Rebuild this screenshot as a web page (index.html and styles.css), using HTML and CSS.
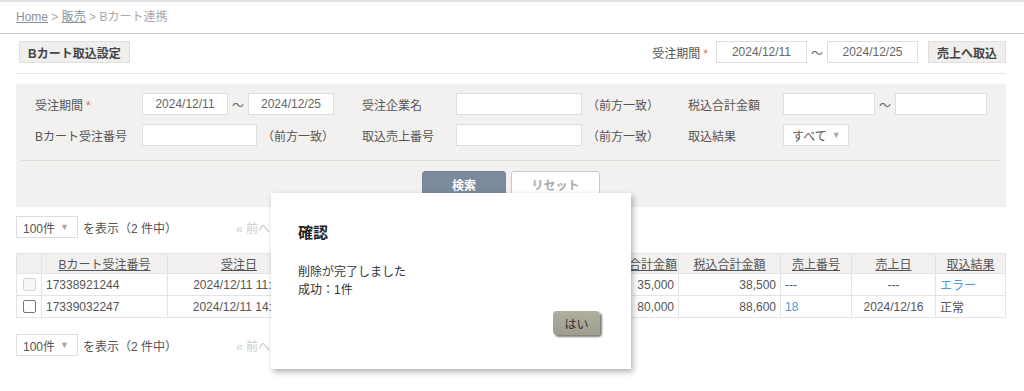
FILE: index.html
```html
<!DOCTYPE html>
<html lang="ja">
<head>
    <meta charset="UTF-8">
    <title>Bカート連携</title>
    <link rel="stylesheet" href="styles.css">
</head>
<body>
    <div class="breadcrumb">
        <a href="#">Home</a> &gt; <a href="#">販売</a> &gt; Bカート連携
    </div>

    <div class="page">
        <div class="toolbar">
            <button class="btn-light">Bカート取込設定</button>
            <div class="toolbar-right">
                <span class="label">受注期間<span class="req">*</span></span>
                <input class="date" value="2024/12/11">
                <span class="tilde">〜</span>
                <input class="date" value="2024/12/25">
                <button class="btn-light">売上へ取込</button>
            </div>
        </div>

        <div class="search-panel">
            <div class="search-grid">
                <span class="label">受注期間<span class="req">*</span></span>
                <div class="field">
                    <input class="date w86" value="2024/12/11">
                    <span class="tilde">〜</span>
                    <input class="date w86" value="2024/12/25">
                </div>
                <span class="label">受注企業名</span>
                <div class="field">
                    <input class="w126">
                    <span class="hint">（前方一致）</span>
                </div>
                <span class="label">税込合計金額</span>
                <div class="field">
                    <input class="w92">
                    <span class="tilde">〜</span>
                    <input class="w92">
                </div>

                <span class="label">Bカート受注番号</span>
                <div class="field">
                    <input class="w115">
                    <span class="hint">（前方一致）</span>
                </div>
                <span class="label">取込売上番号</span>
                <div class="field">
                    <input class="w126">
                    <span class="hint">（前方一致）</span>
                </div>
                <span class="label">取込結果</span>
                <div class="field">
                    <div class="select w66">すべて <span class="arrow">▼</span></div>
                </div>
            </div>
            <div class="search-actions">
                <button class="btn-search">検索</button>
                <button class="btn-reset">リセット</button>
            </div>
        </div>

        <div class="pager">
            <div class="select w62">100件 <span class="arrow">▼</span></div>
            <span class="count">を表示（2 件中）</span>
            <span class="prev">« 前へ</span>
        </div>

        <table class="list">
            <colgroup>
                <col style="width:25px">
                <col style="width:126px">
                <col style="width:143px">
                <col style="width:290px">
                <col style="width:78px">
                <col style="width:102px">
                <col style="width:71px">
                <col style="width:84px">
                <col>
            </colgroup>
            <thead>
                <tr>
                    <th></th>
                    <th><a href="#">Bカート受注番号</a></th>
                    <th><a href="#">受注日</a></th>
                    <th></th>
                    <th><a href="#">税抜合計金額</a></th>
                    <th><a href="#">税込合計金額</a></th>
                    <th><a href="#">売上番号</a></th>
                    <th><a href="#">売上日</a></th>
                    <th><a href="#">取込結果</a></th>
                </tr>
            </thead>
            <tbody>
                <tr>
                    <td class="chk"><span class="box disabled"></span></td>
                    <td>17338921244</td>
                    <td class="center">2024/12/11 11:37</td>
                    <td></td>
                    <td class="num">35,000</td>
                    <td class="num">38,500</td>
                    <td>---</td>
                    <td class="center">---</td>
                    <td><a class="link" href="#">エラー</a></td>
                </tr>
                <tr>
                    <td class="chk"><span class="box"></span></td>
                    <td>17339032247</td>
                    <td class="center">2024/12/11 14:42</td>
                    <td></td>
                    <td class="num">80,000</td>
                    <td class="num">88,600</td>
                    <td><a class="link" href="#">18</a></td>
                    <td class="center">2024/12/16</td>
                    <td>正常</td>
                </tr>
            </tbody>
        </table>

        <div class="pager bottom">
            <div class="select w62">100件 <span class="arrow">▼</span></div>
            <span class="count">を表示（2 件中）</span>
            <span class="prev">« 前へ</span>
        </div>
    </div>

    <div class="dialog">
        <div class="dialog-title">確認</div>
        <div class="dialog-body">
            削除が完了しました<br>
            成功：1件
        </div>
        <div class="dialog-actions">
            <button class="btn-ok">はい</button>
        </div>
    </div>
</body>
</html>
```

FILE: styles.css
```css
body {
    margin: 0;
    font-family: "Liberation Sans", "Noto Sans CJK JP", sans-serif;
    font-size: 12px;
    color: #555;
    border-top: 2px solid #e3e3e3;
    background: #fff;
}
a {
    color: #555;
}
.breadcrumb {
    height: 31px;
    line-height: 30px;
    padding-left: 16px;
    color: #aaa;
    border-bottom: 1px solid #c9c9c9;
}
.breadcrumb a {
    color: #8a8f99;
}
.page {
    margin: 0 18px 0 16px;
}
.toolbar {
    display: flex;
    justify-content: space-between;
    align-items: center;
    padding: 7px 0 10px 3px;
    border-bottom: 1px solid #e6e6e6;
}
.toolbar-right {
    display: flex;
    align-items: center;
}
.toolbar-right .label {
    margin-right: 8px;
}
.toolbar-right .btn-light {
    margin-left: 10px;
}
button {
    font-family: inherit;
    font-size: 12px;
    cursor: pointer;
}
.btn-light {
    height: 22px;
    padding: 0 8px;
    background: #f1efed;
    border: 1px solid #e0dedb;
    color: #444;
    font-weight: bold;
}
.req {
    color: #e8685e;
    margin-left: 3px;
}
input {
    box-sizing: border-box;
    height: 22px;
    border: 1px solid #dedede;
    background: #fff;
    font-family: inherit;
    font-size: 12px;
    color: #666;
    padding: 0 4px;
    margin: 0;
}
input.date {
    width: 91px;
    text-align: center;
}
.tilde {
    margin: 0 4px;
    color: #666;
}
.search-panel {
    margin-top: 10px;
    background: #f3f1ef;
    padding: 9px 5px 9px;
}
.search-grid {
    display: grid;
    grid-template-columns: 107px 220px 94px 232px 95px auto;
    row-gap: 9px;
    align-items: center;
    padding: 0 0 14px 14px;
    border-bottom: 1px solid #dcdad7;
}
.field {
    display: flex;
    align-items: center;
}
.hint {
    margin-left: 5px;
}
input.w86 { width: 86px; }
input.w92 { width: 92px; }
input.w115 { width: 115px; }
input.w126 { width: 126px; }
.select {
    box-sizing: border-box;
    display: flex;
    align-items: center;
    white-space: nowrap;
    height: 22px;
    border: 1px solid #dedede;
    background: #fff;
    padding: 0 6px;
    color: #555;
}
.select.w66 { width: 66px; padding-left: 8px; }
.select.w62 { width: 62px; }
.arrow {
    font-size: 9px;
    color: #aaa;
    margin-left: 5px;
}
.search-actions {
    display: flex;
    justify-content: center;
    gap: 5px;
    margin-top: 10px;
}
.btn-search {
    width: 84px;
    height: 27px;
    border: 1px solid #75849a;
    border-radius: 3px 3px 0 0;
    background: #7b8a9d;
    color: #fff;
    font-weight: bold;
}
.btn-reset {
    width: 89px;
    height: 27px;
    border: 1px solid #c9c9c9;
    border-radius: 3px 3px 0 0;
    background: #fff;
    color: #aaa;
    font-weight: bold;
}
.pager {
    display: flex;
    align-items: center;
    margin-top: 9px;
}
.pager.bottom {
    margin-top: 16px;
}
.count {
    margin-left: 5px;
}
.prev {
    margin-left: 59px;
    color: #ccc;
}
.list {
    width: 990px;
    margin-top: 15px;
    border-collapse: collapse;
    table-layout: fixed;
}
.list th,
.list td {
    border: 1px solid #e4e4e4;
    white-space: nowrap;
    overflow: hidden;
}
.list th {
    height: 19px;
    background: #f3f1ef;
    font-weight: normal;
    text-align: center;
    padding: 0 4px;
}
.list td {
    height: 21px;
    padding: 0 4px;
}
.list .num { text-align: right; }
.list .center { text-align: center; }
.list .chk { text-align: center; padding: 0; }
.box {
    display: inline-block;
    width: 11px;
    height: 11px;
    border: 1px solid #777;
    border-radius: 2px;
    vertical-align: -2px;
}
.box.disabled {
    border-color: #d6d6d6;
    background: #f7f7f7;
}
.link {
    color: #4a9ad8;
    text-decoration: none;
}
.dialog {
    position: absolute;
    left: 271px;
    top: 193px;
    width: 360px;
    height: 176px;
    box-sizing: border-box;
    padding: 30px 31px 0 27px;
    background: #fff;
    box-shadow: 2px 3px 6px rgba(0, 0, 0, 0.3);
}
.dialog-title {
    font-size: 15px;
    font-weight: bold;
    line-height: 20px;
    color: #222;
}
.dialog-body {
    margin-top: 20px;
    line-height: 18px;
    color: #333;
}
.dialog-actions {
    display: flex;
    justify-content: flex-end;
    margin-top: 12px;
}
.btn-ok {
    width: 47px;
    height: 24px;
    border: none;
    border-radius: 4px;
    background: linear-gradient(#b0ae9f, #9f9d8c);
    color: #333;
    box-shadow: 2px 2px 2px rgba(0, 0, 0, 0.5);
}
```
